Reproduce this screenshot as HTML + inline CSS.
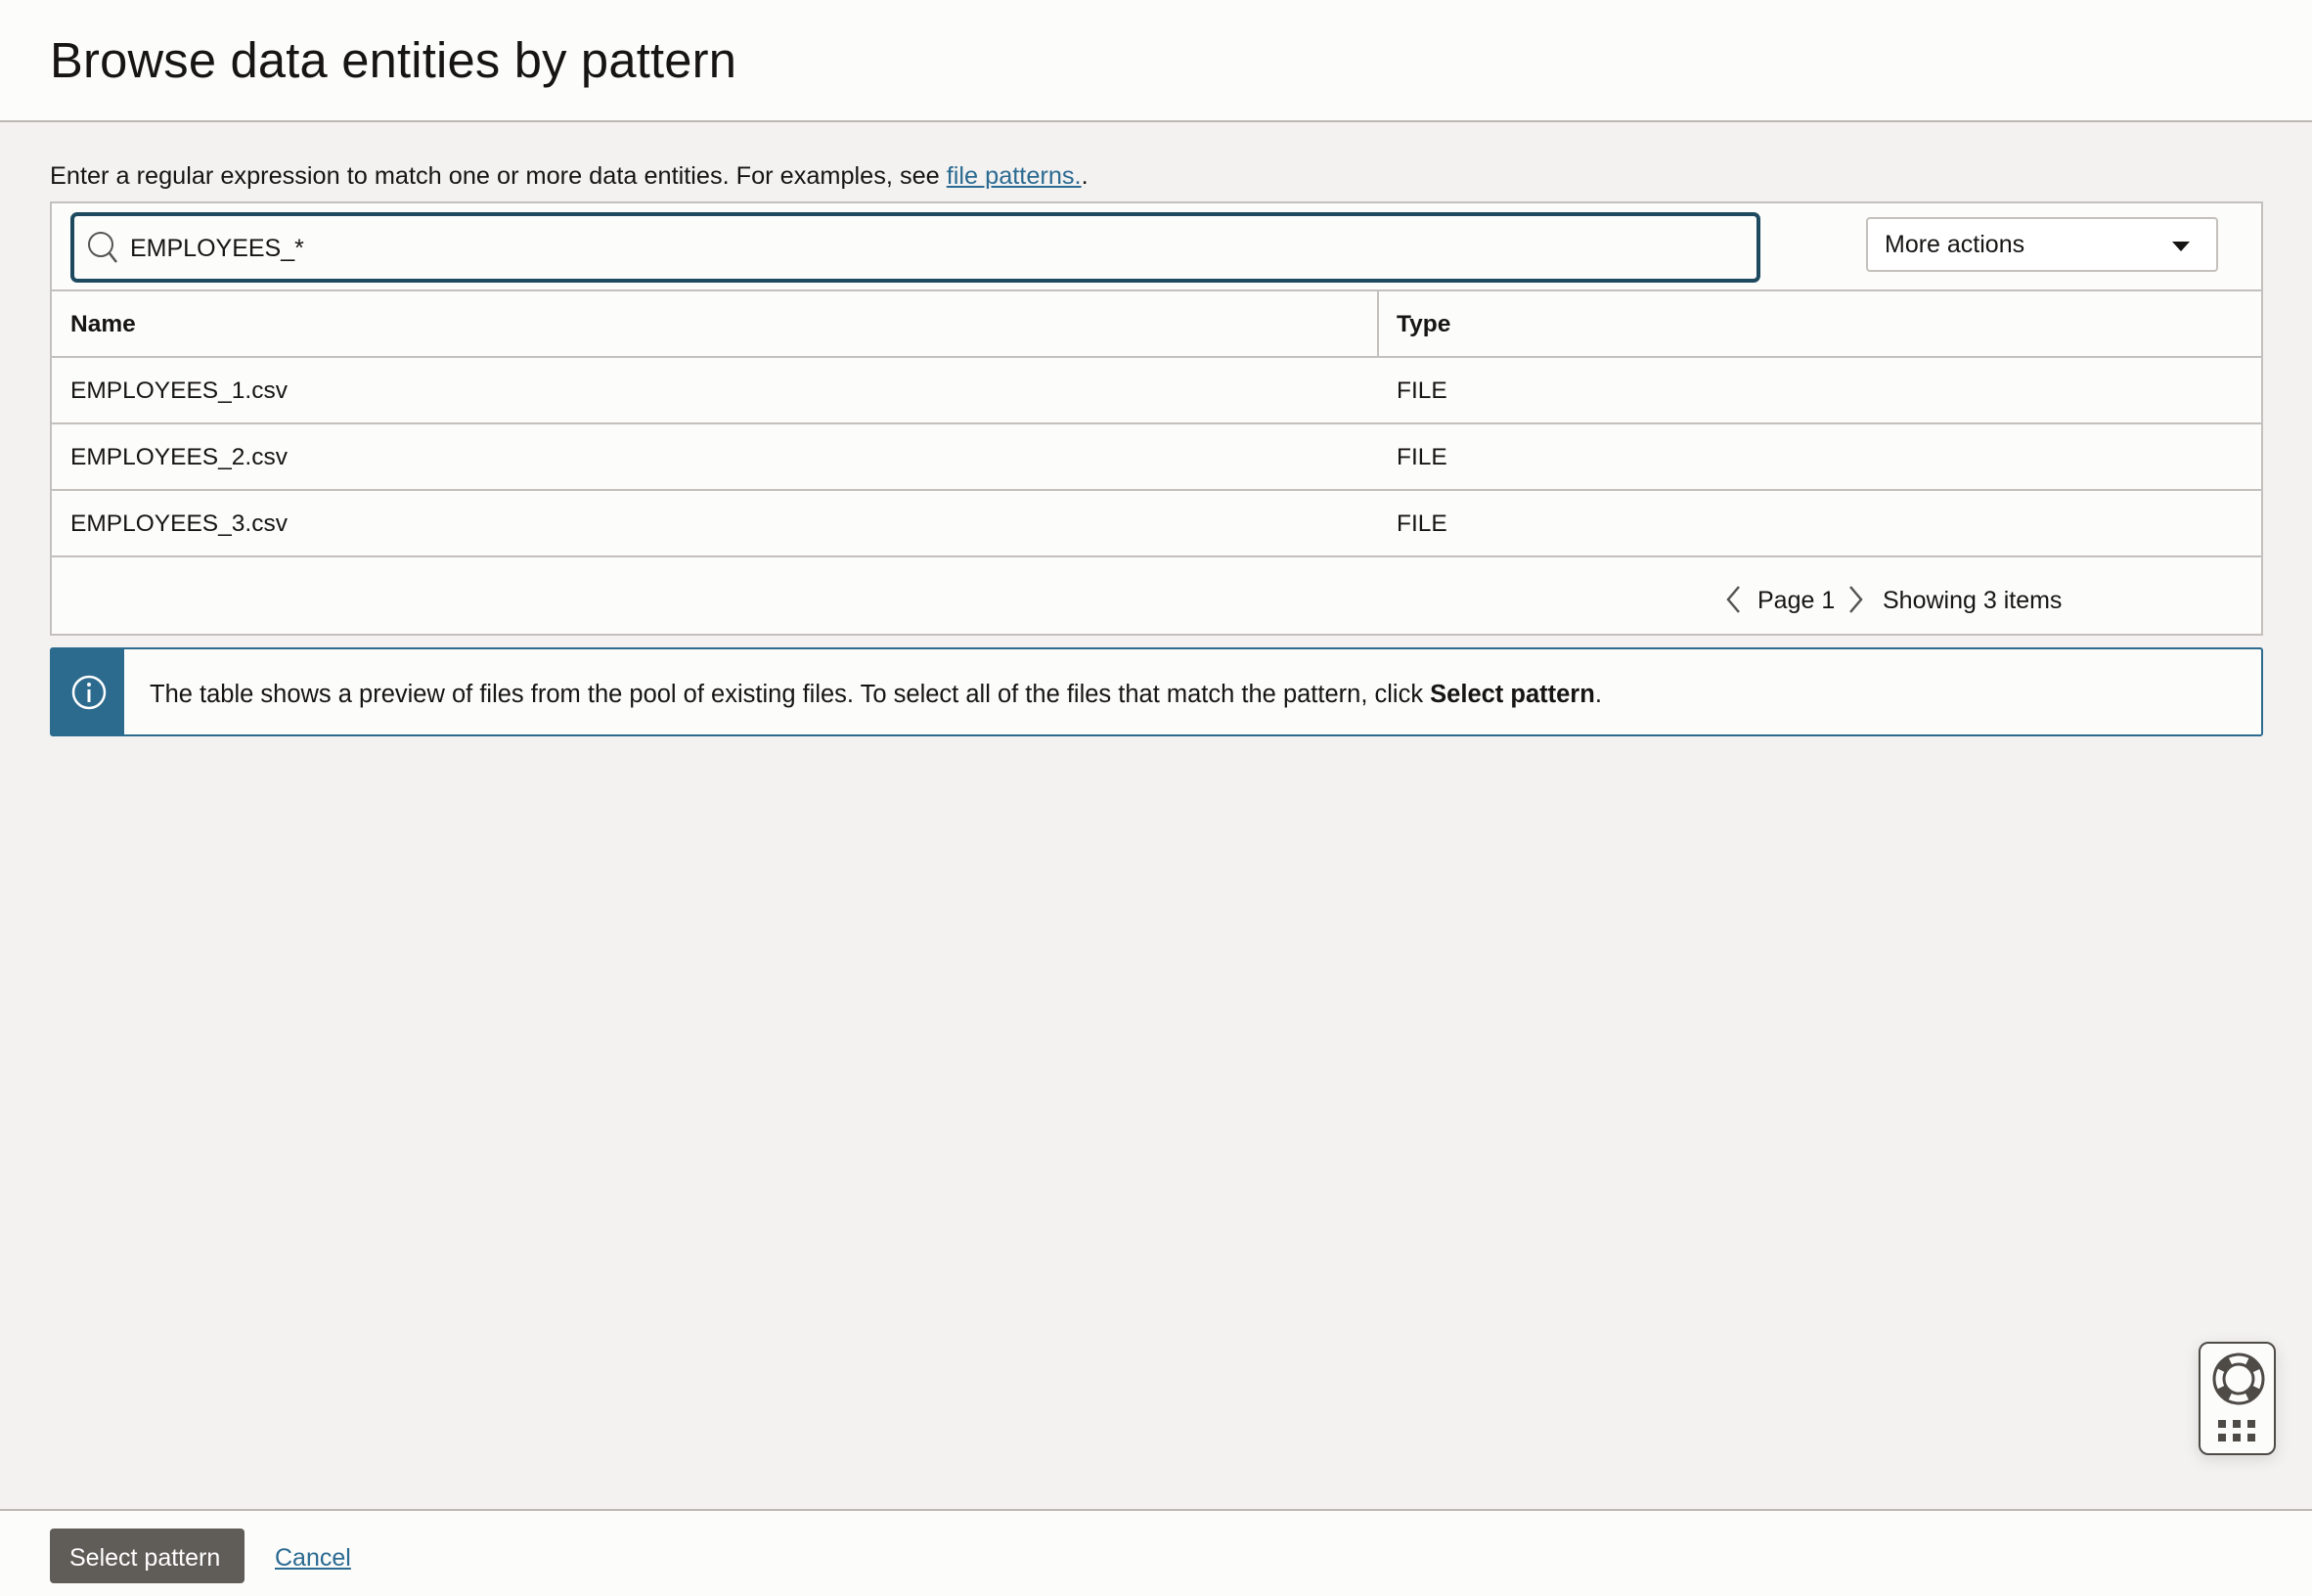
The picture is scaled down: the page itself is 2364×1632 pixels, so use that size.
<!DOCTYPE html>
<html><head><meta charset="utf-8"><style>
*{box-sizing:border-box;margin:0;padding:0}
body{width:2364px;height:1632px;background:#f3f2f1;font-family:"Liberation Sans",sans-serif;color:#161513;position:relative;overflow:hidden;font-size:24px}
.hdr{position:absolute;left:0;top:0;width:2364px;height:125px;background:#fcfcfb;border-bottom:2px solid #bcb8b3}
.hdr h1{position:absolute;left:51px;top:32px;font-size:50.7px;font-weight:normal;letter-spacing:0.2px}
.help{position:absolute;left:51px;top:166px;font-size:25.3px}
.help a{color:#2b6a91;text-decoration:underline}
.tb{position:absolute;left:51px;top:206px;width:2263px;height:444px;border:2px solid #c4c0bb;background:#fcfcfb}
.search{position:absolute;left:19px;top:9px;width:1728px;height:72px;border:4px solid #1e4a60;border-radius:7px;background:#fcfcfb}
.search span{position:absolute;left:57px;top:19px;font-size:25px}
.more{position:absolute;left:1855px;top:14px;width:360px;height:56px;border:2px solid #c4c0bb;border-radius:4px;background:#fff}
.more span{position:absolute;left:17px;top:12px;font-size:25px}
.more i{position:absolute;left:311px;top:23px;width:0;height:0;border-left:9px solid transparent;border-right:9px solid transparent;border-top:10px solid #161513}
.row{position:absolute;left:0;width:2259px;height:68px;border-top:2px solid #c4c0bb}
.row div{position:absolute;top:20px;font-size:24.5px}
.c1{left:19px}.c2{left:1375px}
.pg{position:absolute;top:600px;font-size:25px}
.info{position:absolute;left:51px;top:662px;width:2263px;height:91px;border:2px solid #2c6a8e;border-radius:3px;background:#fcfcfb}
.info .strip{position:absolute;left:0;top:0;width:74px;height:87px;background:#2c6a8e}
.info .t{position:absolute;left:100px;top:32px;font-size:25.5px}
.ftr{position:absolute;left:0;top:1543px;width:2364px;height:89px;background:#fcfcfb;border-top:2px solid #bcb8b3}
.btn{position:absolute;left:51px;top:1563px;width:199px;height:56px;background:#605c58;color:#fff;border-radius:4px;font-size:25px;padding:16px 0 0 20px}
.cancel{position:absolute;left:281px;top:1579px;font-size:25px;color:#2b6a91;text-decoration:underline}
.widget{position:absolute;left:2248px;top:1372px;width:79px;height:116px;border:2px solid #4e4a46;border-radius:10px;background:#fcfcfb;box-shadow:0 4px 16px rgba(0,0,0,0.12)}
</style></head><body>
<div class="hdr"><h1>Browse data entities by pattern</h1></div>
<div class="help">Enter a regular expression to match one or more data entities. For examples, see <a>file patterns.</a>.</div>
<div class="tb">
 <div class="search">
  <svg style="position:absolute;left:12px;top:14px" width="34" height="36" viewBox="0 0 34 36"><circle cx="15" cy="15" r="12" fill="none" stroke="#555" stroke-width="2"/><line x1="24" y1="24" x2="31" y2="33" stroke="#555" stroke-width="2.5"/></svg>
  <span>EMPLOYEES_*</span>
 </div>
 <div class="more"><span>More actions</span><i></i></div>
 <div class="row" style="top:88px;height:68px;border-top:2px solid #c4c0bb"><div class="c1" style="font-weight:bold">Name</div><div class="c2" style="font-weight:bold">Type</div><span style="position:absolute;left:1355px;top:0;width:2px;height:66px;background:#c4c0bb"></span></div>
 <div class="row" style="top:156px"><div class="c1">EMPLOYEES_1.csv</div><div class="c2">FILE</div></div>
 <div class="row" style="top:224px"><div class="c1">EMPLOYEES_2.csv</div><div class="c2">FILE</div></div>
 <div class="row" style="top:292px"><div class="c1">EMPLOYEES_3.csv</div><div class="c2">FILE</div></div>
 <div class="row" style="top:360px;height:80px"></div>
</div>
<svg style="position:absolute;left:1762px;top:597px" width="20" height="32" viewBox="0 0 20 32"><polyline points="16,3 5,16 16,29" fill="none" stroke="#555" stroke-width="2.5"/></svg>
<div class="pg" style="left:1797px">Page 1</div>
<svg style="position:absolute;left:1888px;top:597px" width="20" height="32" viewBox="0 0 20 32"><polyline points="4,3 15,16 4,29" fill="none" stroke="#555" stroke-width="2.5"/></svg>
<div class="pg" style="left:1925px">Showing 3 items</div>
<div class="info"><div class="strip">
 <svg style="position:absolute;left:19px;top:25px" width="38" height="38" viewBox="0 0 38 38"><circle cx="19" cy="19" r="16" fill="none" stroke="#fff" stroke-width="2.5"/><circle cx="19" cy="11" r="2" fill="#fff"/><rect x="17.5" y="16" width="3" height="13" fill="#fff"/></svg>
</div><div class="t">The table shows a preview of files from the pool of existing files. To select all of the files that match the pattern, click <b>Select pattern</b>.</div></div>
<div class="widget">
 <svg style="position:absolute;left:11px;top:8px" width="56" height="56" viewBox="0 0 56 56"><circle cx="28" cy="28" r="20" fill="none" stroke="#4e4a46" stroke-width="13"/><circle cx="28" cy="28" r="20" fill="none" stroke="#fcfcfb" stroke-width="7" stroke-dasharray="18 13.42" stroke-dashoffset="9"/></svg>
 <svg style="position:absolute;left:18px;top:78px" width="40" height="24" viewBox="0 0 40 24"><g fill="#4e4a46"><rect x="0" y="0" width="8" height="8"/><rect x="15" y="0" width="8" height="8"/><rect x="30" y="0" width="8" height="8"/><rect x="0" y="14" width="8" height="8"/><rect x="15" y="14" width="8" height="8"/><rect x="30" y="14" width="8" height="8"/></g></svg>
</div>
<div class="ftr"></div>
<div class="btn">Select pattern</div>
<div class="cancel">Cancel</div>
</body></html>
